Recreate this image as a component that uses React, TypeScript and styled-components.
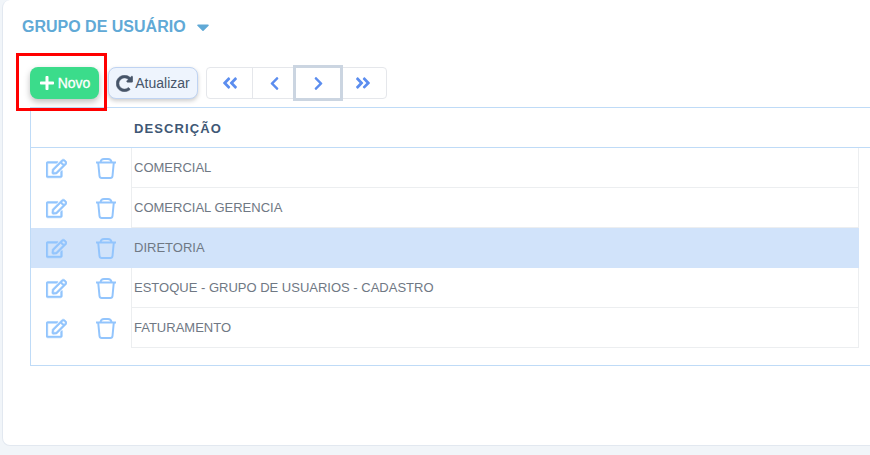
import React from 'react';
import styled, { createGlobalStyle } from 'styled-components';
import { FaPlus, FaRedoAlt, FaRegEdit, FaCaretDown, FaAngleDoubleLeft, FaAngleDoubleRight, FaChevronLeft, FaChevronRight } from 'react-icons/fa';

const rows = ['COMERCIAL', 'COMERCIAL GERENCIA', 'DIRETORIA', 'ESTOQUE - GRUPO DE USUARIOS - CADASTRO', 'FATURAMENTO'];

const TrashIcon: React.FC = () => (
  <svg width="20" height="21" viewBox="0 0 20 21" fill="none" stroke="#93c5fd" strokeWidth="2" strokeLinejoin="round">
    <path d="M0 4.500h20" />
    <path d="M4.500 4q.5-3 3.500-3h4q3 0 3.500 3" />
    <path d="M2.200 4.500l1.300 13.500q.2 2 2.200 2h8.600q2 0 2.200-2l1.300-13.500" />
  </svg>
);

export default function App() {
  return (
    <Page>
      <GlobalStyle />
      <Card>
        <Title>
          GRUPO DE USUÁRIO
          <FaCaretDown size={20} />
        </Title>
        <Toolbar>
          <NewButton>
            <FaPlus size={16} />
            Novo
            <Highlight />
          </NewButton>
          <RefreshButton>
            <FaRedoAlt size={17} stroke="#475569" strokeWidth={16} />
            Atualizar
          </RefreshButton>
          <Pager>
            <PageButton $width={46}>
              <FaAngleDoubleLeft size={18} />
            </PageButton>
            <PageButton $width={43}>
              <FaChevronLeft size={15} />
            </PageButton>
            <PageButton $width={44} $focused>
              <FaChevronRight size={15} />
            </PageButton>
            <PageButton $width={46}>
              <FaAngleDoubleRight size={18} />
            </PageButton>
          </Pager>
        </Toolbar>
        <TableBox>
          <HeadRow>
            <HeadLabel>DESCRIÇÃO</HeadLabel>
          </HeadRow>
          <Body>
            {rows.map((name, i) => (
              <Row key={name} $selected={i === 2}>
                <Actions>
                  <FaRegEdit size={21} color="#93c5fd" stroke="#93c5fd" strokeWidth={14} />
                  <TrashIcon />
                </Actions>
                <Description $selected={i === 2}>{name}</Description>
              </Row>
            ))}
          </Body>
        </TableBox>
      </Card>
    </Page>
  );
}

const GlobalStyle = createGlobalStyle`
  html, body {
    margin: 0;
    padding: 0;
    overflow: hidden;
    background: #f1f5f9;
  }
`;

const Page = styled.div`
  width: 870px;
  height: 455px;
  overflow: hidden;
  padding-left: 2px;
  box-sizing: border-box;
  font-family: 'Liberation Sans', Arial, sans-serif;
`;

const Card = styled.div`
  width: 900px;
  height: 446px;
  box-sizing: border-box;
  background: #fff;
  border: 1px solid #e2e8f0;
  border-top: none;
  border-radius: 8px;
  padding: 18px 0 0 19px;
`;

const Title = styled.div`
  display: flex;
  align-items: center;
  gap: 7px;
  height: 18px;
  color: #60a9d6;
  font-size: 16px;
  font-weight: 700;
  svg {
    color: #60a9d6;
  }
`;

const Toolbar = styled.div`
  display: flex;
  align-items: center;
  margin: 31px 0 0 8px;
  height: 32px;
`;

const NewButton = styled.button`
  position: relative;
  display: flex;
  align-items: center;
  justify-content: center;
  gap: 3px;
  width: 69px;
  height: 32px;
  padding: 0;
  border: none;
  border-radius: 8px;
  background: #3bdc8b;
  color: #fff;
  font-family: inherit;
  font-size: 14px;
  font-weight: 400;
  -webkit-text-stroke: 0.3px #fff;
  box-shadow: 0 3px 6px rgba(0, 0, 0, 0.25);
`;

const Highlight = styled.span`
  position: absolute;
  left: -14px;
  top: -14px;
  width: 85px;
  height: 52px;
  border: 3px solid #f00;
  pointer-events: none;
`;

const RefreshButton = styled.button`
  display: flex;
  align-items: center;
  justify-content: center;
  gap: 2px;
  width: 90px;
  height: 32px;
  margin-left: 9px;
  padding: 0;
  border: 1px solid #bfd3f2;
  border-radius: 8px;
  background: #eef4fd;
  color: #475569;
  font-family: inherit;
  font-size: 14px;
  box-shadow: 0 2px 4px rgba(0, 0, 0, 0.2);
  svg {
    color: #475569;
  }
`;

const Pager = styled.div`
  display: flex;
  width: 181px;
  height: 32px;
  margin-left: 8px;
  box-sizing: border-box;
  border: 1px solid #e5e7eb;
  border-radius: 4px;
`;

const PageButton = styled.div<{ $focused?: boolean; $width: number }>`
  position: relative;
  width: ${p => p.$width}px;
  box-sizing: border-box;
  display: flex;
  align-items: center;
  justify-content: center;
  color: #5b8def;
  border-right: 1px solid #e5e7eb;
  &:last-child {
    border-right: none;
  }
  ${p =>
    p.$focused &&
    `
    outline: 3px solid #cbd5e1;
    border-right: none;
    background: #fff;
    z-index: 1;
  `}
`;

const TableBox = styled.div`
  margin: 8px 0 0 8px;
  height: 259px;
  box-sizing: border-box;
  border-left: 1px solid #bfdbf7;
  border-top: 1px solid #bfdbf7;
  border-bottom: 1px solid #bfdbf7;
`;

const HeadRow = styled.div`
  display: flex;
  align-items: center;
  height: 40px;
  padding: 1px 0 0 103px;
  box-sizing: border-box;
  border-bottom: 1px solid #bfdbf7;
`;

const HeadLabel = styled.span`
  color: #3f5875;
  font-size: 13px;
  font-weight: 700;
  letter-spacing: 1.1px;
`;

const Body = styled.div`
  width: 828px;
`;

const Row = styled.div<{ $selected?: boolean }>`
  display: flex;
  height: 40px;
  background: ${p => (p.$selected ? '#d1e3fa' : 'transparent')};
`;

const Actions = styled.div`
  display: flex;
  align-items: center;
  gap: 29px;
  width: 100px;
  flex-shrink: 0;
  padding-left: 15px;
  box-sizing: border-box;
`;

const Description = styled.div<{ $selected?: boolean }>`
  flex: 1;
  display: flex;
  align-items: center;
  padding-left: 2px;
  box-sizing: border-box;
  color: #6f7884;
  font-size: 13px;
  border: 1px solid #eceef0;
  border-top: none;
  ${p => p.$selected && 'border-color: #d1e3fa;'}
`;
